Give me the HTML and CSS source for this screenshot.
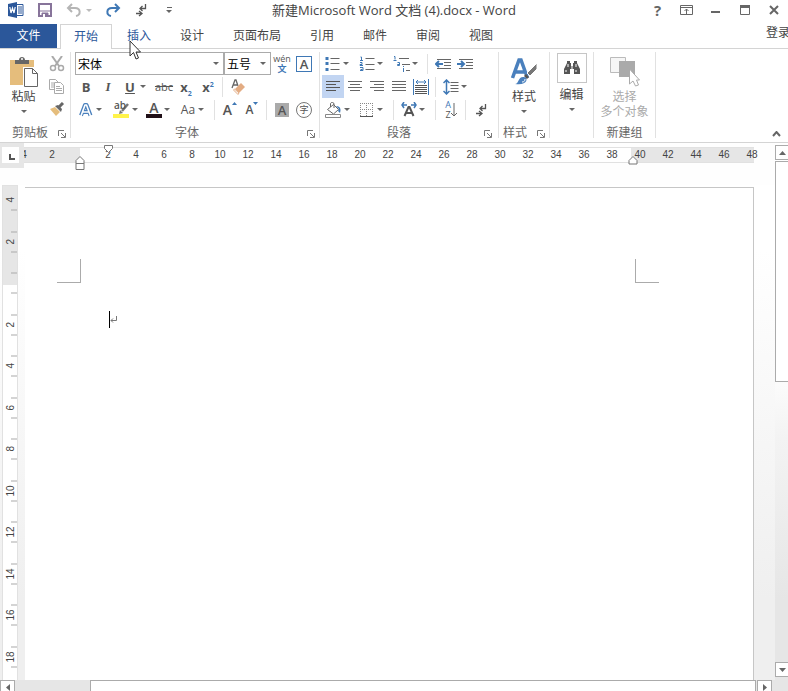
FILE: index.html
```html
<!DOCTYPE html>
<html lang="zh-CN">
<head>
<meta charset="utf-8">
<title>新建Microsoft Word 文档 (4).docx - Word</title>
<link rel="stylesheet" href="styles.css">
</head>
<body>
<header class="titlebar">
  <div class="quick">
    <svg class="logo" width="16" height="16" viewBox="0 0 16 16" aria-hidden="true"><path d="M8 2.500h7v11H8z" fill="#fff" stroke="#2b579a"/><path d="M10 5h4M10 7h4M10 9h4M10 11h4" stroke="#2b579a"/><path d="M0 2l9-2v16l-9-2z" fill="#2b579a"/><path d="M1.800 5l1.200 6 1.500-5 1.500 5 1.200-6" fill="none" stroke="#fff" stroke-width="1.200"/></svg>
    <button class="q" aria-label="保存"><svg width="14" height="14" viewBox="0 0 14 14"><path d="M1 1h12v12H1z" fill="#fff" stroke="#87749a" stroke-width="2"/><path d="M1 8h12M4 10h6v4H4z" fill="#87749a" stroke="#87749a"/><path d="M5 11h2v3H5z" fill="#fff"/></svg></button>
    <button class="q split" aria-label="撤销"><svg width="16" height="14" viewBox="0 0 16 14" fill="none" stroke="#b5b5b5" stroke-width="2"><path d="M6 1L2 5l4 4M2 5h7c6 0 6 7 1 8"/></svg><i class="caret pale"></i></button>
    <button class="q" aria-label="恢复"><svg width="16" height="14" viewBox="0 0 16 14" fill="none" stroke="#3f78b5" stroke-width="2"><path d="M10 1l4 4-4 4M14 5H7c-6 0-6 7-1 8"/></svg></button>
    <button class="q" aria-label="显示标记"><svg width="12" height="14" viewBox="0 0 12 14" fill="none" stroke="#555"><path d="M10.500 1v4.500H5M7.500 3L5 5.500 7.500 8M1 10.500h6M4 8l3 2.500L4 13" stroke-width="1.300"/></svg></button>
    <button class="q" aria-label="自定义快速访问工具栏"><svg width="7" height="7" viewBox="0 0 7 7"><path d="M1 .5h5" stroke="#666"/><path d="M0 3h6L3 6z" fill="#666"/></svg></button>
  </div>
  <h1>新建Microsoft Word 文档 (4).docx - Word</h1>
  <div class="window">
    <button class="help" aria-label="帮助">?</button>
    <button aria-label="功能区显示选项"><svg width="13" height="10" viewBox="0 0 13 10" fill="none" stroke="#666"><path d="M.5.5h12v9H.5zM.5 2.500h12M6.500 9V4M4.500 6l2-2 2 2"/></svg></button>
    <button aria-label="最小化"><svg width="10" height="10" viewBox="0 0 10 10"><path d="M0 6h9v2H0z" fill="#666"/></svg></button>
    <button aria-label="最大化"><svg width="10" height="10" viewBox="0 0 10 10"><path d="M.5.5h9v9h-9z" fill="none" stroke="#666"/><path d="M0 0h10v3H0z" fill="#666"/></svg></button>
    <button aria-label="关闭"><svg width="10" height="10" viewBox="0 0 10 10"><path d="M1 1l8 8M9 1L1 9" stroke="#666" stroke-width="2"/></svg></button>
  </div>
</header>

<nav class="tabs">
  <button class="file">文件</button>
  <button class="active">开始</button>
  <button class="hover">插入</button>
  <button>设计</button>
  <button>页面布局</button>
  <button>引用</button>
  <button>邮件</button>
  <button>审阅</button>
  <button>视图</button>
  <a class="signin" href="#">登录</a>
  <svg class="pointer" width="12" height="20" viewBox="0 0 12 20" aria-hidden="true"><path d="M1 1v15l3.500-3.500L7 19l2.500-1L7 12h4.500z" fill="#fff" stroke="#333"/></svg>
</nav>

<section class="ribbon">
  <section class="group board">
    <div class="body clip">
      <button class="big"><svg width="30" height="31" viewBox="0 0 30 31"><path d="M1 4h24v25H1z" fill="#e5bd7c"/><path d="M6 4h4c0-4 6-4 6 0h4v4H6z" fill="#666"/><circle cx="13" cy="3" r="1" fill="#fff"/><path d="M14 11h16v20H14z" fill="#fff"/><path d="M15.500 12.500h8l5 5v13h-13z" fill="#fff" stroke="#666"/><path d="M23.500 12.500v5h5" fill="none" stroke="#666"/></svg><span>粘贴</span><i class="caret"></i></button>
      <div class="stack">
        <button aria-label="剪切"><svg width="16" height="16" viewBox="0 0 16 16" fill="none" stroke="#aaa" stroke-width="2"><path d="M3 0l7 10M13 0L6 10"/><circle cx="4" cy="12" r="2.500" stroke-width="1.500"/><circle cx="12" cy="12" r="2.500" stroke-width="1.500"/></svg></button>
        <button aria-label="复制"><svg width="16" height="15" viewBox="0 0 16 15" fill="#fff" stroke="#aaa"><path d="M.5.5h6l3 3v7h-9z"/><path d="M2 4h3M2 6h3M2 8h3"/><path d="M5.500 3.500h6l3 3v8h-9z"/><path d="M7 7.500h4M7 9.500h6M7 11.500h6"/></svg></button>
        <button aria-label="格式刷"><svg width="16" height="15" viewBox="0 0 16 15"><path d="M1 7l5-2 5 5-4 4z" fill="#e5bd7c"/><path d="M6 4l3-1 4 4-1 3z" fill="#666"/><path d="M10 5l4-4" stroke="#666" stroke-width="3"/></svg></button>
      </div>
    </div>
    <footer><span>剪贴板</span><button class="launch" aria-label="剪贴板选项"><svg width="8" height="8" viewBox="0 0 8 8"><path d="M.5 6V.5H6M3 3l4 4M7.500 3v4.500H3" fill="none" stroke="#777"/></svg></button></footer>
  </section>

  <section class="group font">
    <div class="body rows">
      <div class="row">
        <label class="combo name"><select aria-label="字体"><option>宋体</option></select><i class="caret"></i></label>
        <label class="combo size"><select aria-label="字号"><option>五号</option></select><i class="caret"></i></label>
        <button class="i pinyin" aria-label="拼音指南"><small>wén</small><b>文</b></button>
        <button class="i" aria-label="字符边框"><span class="boxed">A</span></button>
      </div>
      <div class="row">
        <button class="i"><b>B</b></button>
        <button class="i"><b class="ital">I</b></button>
        <button class="i d"><b class="under">U</b><i class="caret"></i></button>
        <button class="i"><s>abc</s></button>
        <button class="i"><b>x<sub>2</sub></b></button>
        <button class="i"><b>x<sup>2</sup></b></button>
        <hr>
        <button class="i" aria-label="清除所有格式"><svg width="16" height="16" viewBox="0 0 16 16"><path d="M2 9l3-8h1l2 6M3 6h4" fill="none" stroke="#666" stroke-width="1.300"/><path d="M5 10l6-6 4 4-6 6z" fill="#e3ac83"/><path d="M3.500 11l1-1L9 14l-1 1.500z" fill="#fff" stroke="#e3ac83"/></svg></button>
      </div>
      <div class="row">
        <button class="i d" aria-label="文本效果"><svg width="16" height="16" viewBox="0 0 16 16" fill="none" stroke-linejoin="round"><path d="M3 13.500L7 3h1.500l4 10.500M5 10h6" stroke="#4a80bd" stroke-width="4"/><path d="M3 14L7 3h1.500l4 11M5 10h6" stroke="#fff" stroke-width="1.600"/></svg><i class="caret"></i></button>
        <button class="i d hl" aria-label="突出显示"><span>ab</span><svg width="18" height="17" viewBox="0 0 18 17"><path d="M16 3l-6 7" stroke="#777" stroke-width="2.500"/><path d="M8 9l3 3-4 1z" fill="#777"/><path d="M1 13h16v4H1z" fill="#fff34a"/></svg><i class="caret"></i></button>
        <button class="i d" aria-label="字体颜色"><span class="inked">A</span><i class="caret"></i></button>
        <button class="i d"><span>Aa</span><i class="caret"></i></button>
        <hr>
        <button class="i grow" aria-label="增大字体"><span>A</span><svg width="5" height="3" viewBox="0 0 5 3"><path d="M0 3h5L2.500 0z" fill="#3f78b5"/></svg></button>
        <button class="i grow less" aria-label="减小字体"><span>A</span><svg width="5" height="3" viewBox="0 0 5 3"><path d="M0 0h5L2.500 3z" fill="#3f78b5"/></svg></button>
        <hr>
        <button class="i"><span class="shade">A</span></button>
        <button class="i"><span class="ring">字</span></button>
      </div>
    </div>
    <footer><span>字体</span><button class="launch" aria-label="字体选项"><svg width="8" height="8" viewBox="0 0 8 8"><path d="M.5 6V.5H6M3 3l4 4M7.500 3v4.500H3" fill="none" stroke="#777"/></svg></button></footer>
  </section>

  <section class="group para">
    <div class="body rows">
      <div class="row">
        <button class="i d" aria-label="项目符号"><svg width="15" height="15" viewBox="0 0 15 15"><path d="M0 1h3v3H0zM0 6h3v3H0zM0 12h3v3H0z" fill="#3f78b5"/><path d="M5 2.500h9M5 7.500h9M5 13.500h9" stroke="#666"/></svg><i class="caret"></i></button>
        <button class="i d" aria-label="编号"><svg width="15" height="16" viewBox="0 0 15 16"><path d="M1 1h1v3M.5 4.500h3M.5 6.500h2v2h-2v1h3M.5 11.500h3v3h-3M1 13.500h2" fill="none" stroke="#3f78b5"/><path d="M6 2.500h9M6 8.500h9M6 13.500h9" stroke="#666"/></svg><i class="caret"></i></button>
        <button class="i d" aria-label="多级列表"><svg width="17" height="16" viewBox="0 0 17 16"><path d="M1 .5h1v3M.5 4.500h3M4.500 6.500h2v3h-2v-1h2M10.500 10v1M10.500 12v4" fill="none" stroke="#3f78b5"/><path d="M6 2.500h10M9 8.500h8M13 14.500h4" stroke="#666"/></svg><i class="caret"></i></button>
        <hr>
        <button class="i" aria-label="减少缩进量"><svg width="16" height="12" viewBox="0 0 16 12"><path d="M2 1.500h14M9 4.500h7M9 7.500h7M2 10.500h14" stroke="#666"/><path d="M8 6H1M4 3L1 6l3 3" fill="none" stroke="#3f78b5" stroke-width="2"/></svg></button>
        <button class="i" aria-label="增加缩进量"><svg width="16" height="12" viewBox="0 0 16 12"><path d="M2 1.500h14M9 4.500h7M9 7.500h7M2 10.500h14" stroke="#666"/><path d="M0 6h7M4 3l3 3-3 3" fill="none" stroke="#3f78b5" stroke-width="2"/></svg></button>
      </div>
      <div class="row">
        <button class="i on" aria-label="左对齐"><svg width="14" height="11" viewBox="0 0 14 11"><path d="M0 .5h14M0 3.500h10M0 6.500h14M0 9.500h10" stroke="#555"/></svg></button>
        <button class="i" aria-label="居中"><svg width="14" height="11" viewBox="0 0 14 11"><path d="M0 .5h14M2 3.500h10M0 6.500h14M2 9.500h10" stroke="#666"/></svg></button>
        <button class="i" aria-label="右对齐"><svg width="14" height="11" viewBox="0 0 14 11"><path d="M0 .5h14M4 3.500h10M0 6.500h14M4 9.500h10" stroke="#666"/></svg></button>
        <button class="i" aria-label="两端对齐"><svg width="14" height="11" viewBox="0 0 14 11"><path d="M0 .5h14M0 3.500h14M0 6.500h14M0 9.500h14" stroke="#666"/></svg></button>
        <button class="i" aria-label="分散对齐"><svg width="16" height="16" viewBox="0 0 16 16"><path d="M.5 0v16M15.500 0v16M3 3h10M5 1L3 3l2 2M11 1l2 2-2 2" fill="none" stroke="#3f78b5"/><path d="M2 6.500h12M2 8.500h12M2 10.500h12M2 12.500h12M2 14.500h12" stroke="#555"/></svg></button>
        <hr>
        <button class="i d" aria-label="行距"><svg width="15" height="16" viewBox="0 0 15 16"><path d="M3 1v14M0 4l3-3 3 3M0 12l3 3 3-3" fill="none" stroke="#3f78b5" stroke-width="1.500"/><path d="M7 3.500h8M7 6.500h8M7 9.500h8M7 12.500h8" stroke="#666"/></svg><i class="caret"></i></button>
      </div>
      <div class="row">
        <button class="i d" aria-label="底纹"><svg width="17" height="16" viewBox="0 0 17 16"><path d="M2.500 7.500l6-5 5 5-5 4.500zM5.500 5V1.500C6 0 9 0 9 2v4" fill="#fff" stroke="#666"/><path d="M11 4c5 0 5 4 4 7l-2-2 1-2z" fill="#3f78b5"/><path d="M.5 12.500h15v3H.5z" fill="#fff" stroke="#888"/></svg><i class="caret"></i></button>
        <button class="i d" aria-label="边框"><svg width="14" height="14" viewBox="0 0 14 14"><path d="M0 .5h13M0 6.500h13M.5 0v13M6.500 0v13M12.500 0v13" stroke="#888" stroke-dasharray="1 1"/><path d="M0 13.500h13" stroke="#555"/></svg><i class="caret"></i></button>
        <hr>
        <button class="i d" aria-label="中文版式"><svg width="16" height="15" viewBox="0 0 16 15" fill="none"><path d="M3.500 14L7.500 5h1l4 9M5 11h6" stroke="#555" stroke-width="2"/><path d="M6 3H1M3 0L1 3l2 3M10 3h5M13 0l2 3-2 3" stroke="#3f78b5" stroke-width="1.500"/></svg><i class="caret"></i></button>
        <hr>
        <button class="i sort" aria-label="排序"><span><em>A</em><em>Z</em></span><svg width="6" height="14" viewBox="0 0 6 14"><path d="M3 0v13M0 10l3 3 3-3" fill="none" stroke="#666"/></svg></button>
        <hr>
        <button class="i" aria-label="显示编辑标记"><svg width="12" height="14" viewBox="0 0 12 14" fill="none" stroke="#555"><path d="M10.500 1v4.500H5M7.500 3L5 5.500 7.500 8M1 10.500h6M4 8l3 2.500L4 13" stroke-width="1.300"/></svg></button>
      </div>
    </div>
    <footer><span>段落</span><button class="launch" aria-label="段落选项"><svg width="8" height="8" viewBox="0 0 8 8"><path d="M.5 6V.5H6M3 3l4 4M7.500 3v4.500H3" fill="none" stroke="#777"/></svg></button></footer>
  </section>

  <section class="group narrow">
    <div class="body">
      <button class="big"><svg width="28" height="31" viewBox="0 0 28 31"><path d="M2.500 22L9 4h2l6.500 18M5 16h10" fill="none" stroke="#4a80bd" stroke-width="3.500"/><path d="M27 7v6l-7 7-3-3z" fill="#777" stroke="#fff"/><path d="M16 18l3 3-2 2-3-3z" fill="#555"/><path d="M5 28c4 0 3-8 9-7 5 1 3 9-9 7z" fill="#4a80bd"/><path d="M12 26c2 0 3-1 3-3" stroke="#fff" fill="none"/></svg><span>样式</span><i class="caret"></i></button>
    </div>
    <footer><span>样式</span><button class="launch" aria-label="样式选项"><svg width="8" height="8" viewBox="0 0 8 8"><path d="M.5 6V.5H6M3 3l4 4M7.500 3v4.500H3" fill="none" stroke="#777"/></svg></button></footer>
  </section>

  <section class="group edit">
    <div class="body">
      <button class="big"><span class="frame"><svg width="16" height="14" viewBox="0 0 16 14"><path d="M3 0h3v2h1v3h2V2h1V0h3v2l3 6v5h-6V8H6v5H0V8l3-6z" fill="#555"/><path d="M4 3v3M12 3v3M2 9v2M12 9v2M8 5v3" stroke="#fff"/></svg></span><span>编辑</span><i class="caret"></i></button>
    </div>
    <footer></footer>
  </section>

  <section class="group last">
    <div class="body">
      <button class="big" disabled><svg width="30" height="31" viewBox="0 0 30 31"><path d="M.5 1.500h15v15H.5z" fill="#f6f6f6" stroke="#bbb"/><path d="M9 5h16v16H9z" fill="#aaa"/><path d="M19.500 13v15l3.500-3 2.500 5 3-1-2-5h3z" fill="#fff" stroke="#aaa"/></svg><span>选择</span><span class="second">多个对象</span></button>
    </div>
    <footer><span>新建组</span></footer>
  </section>
  <button class="collapse" aria-label="折叠功能区"><svg width="9" height="6" viewBox="0 0 9 6"><path d="M1 5l3.500-4L8 5" fill="none" stroke="#666" stroke-width="2"/></svg></button>
</section>

<main class="workspace">
  <div class="canvas">
    <div class="top">
      <button class="tabstop" aria-label="制表符"><svg width="6" height="6" viewBox="0 0 6 6"><path d="M1 0v5h5" fill="none" stroke="#555" stroke-width="2"/></svg></button>
      <div class="hruler">
        <ol><li>4<li>2<li><li>2<li>4<li>6<li>8<li>10<li>12<li>14<li>16<li>18<li>20<li>22<li>24<li>26<li>28<li>30<li>32<li>34<li>36<li>38<li>40<li>42<li>44<li>46<li>48</ol>
        <svg class="mark first" width="11" height="9" viewBox="0 0 11 9"><path d="M1.500.5h8v3l-4 4-4-4z" fill="#fff" stroke="#777"/></svg>
        <svg class="mark hang" width="10" height="15" viewBox="0 0 10 15"><path d="M1 13.500v-9l4-4 4 4v9zM1 7.500h8" fill="#fff" stroke="#777"/></svg>
        <svg class="mark right" width="10" height="9" viewBox="0 0 10 9"><path d="M1 8V4.500l4-4 4 4V8z" fill="#fff" stroke="#777"/></svg>
      </div>
    </div>
    <div class="desk">
      <div class="vruler"><ol><li>4<li>2<li><li>2<li>4<li>6<li>8<li>10<li>12<li>14<li>16<li>18</ol></div>
      <article class="page">
        <div class="corners"><i></i><i></i></div>
        <p contenteditable="true" aria-label="正文"><span class="beam"></span><svg width="8" height="8" viewBox="0 0 8 8"><path d="M6.500 0v4.500H1M3 2.500l-2 2 2 2" fill="none" stroke="#777"/></svg></p>
      </article>
    </div>
  </div>
  <div class="vscroll">
    <button aria-label="向上滚动"><svg width="7" height="4" viewBox="0 0 7 4"><path d="M0 4h7L3.500 0z" fill="#666"/></svg></button>
    <div class="thumb"></div>
    <button class="end" aria-label="向下滚动"><svg width="7" height="4" viewBox="0 0 7 4"><path d="M0 0h7L3.500 4z" fill="#666"/></svg></button>
  </div>
</main>
<div class="hscroll">
  <button aria-label="向左滚动"><svg width="4" height="7" viewBox="0 0 4 7"><path d="M4 0v7L0 3.500z" fill="#666"/></svg></button>
  <div class="thumb"></div>
  <button aria-label="向右滚动"><svg width="4" height="7" viewBox="0 0 4 7"><path d="M0 0v7l4-3.500z" fill="#666"/></svg></button>
</div>
</body>
</html>
```

FILE: styles.css
```css
* { box-sizing: border-box; }

body {
  margin: 0;
  height: 100vh;
  display: flex;
  flex-direction: column;
  overflow: hidden;
  background: #fff;
  color: #444;
  font: 12px/16px "Open Sans", "Noto Sans CJK SC", sans-serif;
}

button {
  display: flex;
  align-items: center;
  justify-content: center;
  padding: 0;
  border: 0;
  background: none;
  color: inherit;
  font: inherit;
}

svg { display: block; flex: none; }

.caret {
  flex: none;
  border: 3px solid transparent;
  border-top-color: #666;
  border-bottom: 0;
}
.caret.pale { border-top-color: #bbb; }

/* Title bar */
.titlebar {
  display: grid;
  grid-template-columns: 1fr auto 1fr;
  align-items: center;
  height: 24px;
  padding-bottom: 4px;
}
.titlebar h1 { margin: 0; font-size: 13px; font-weight: 400; }
.quick { display: flex; gap: 6px; align-items: center; padding-left: 8px; }
.q { width: 22px; height: 20px; }
.q.split { gap: 4px; width: 34px; }
.logo { margin-right: 4px; }
.window { display: flex; justify-content: flex-end; }
.window button { width: 29px; height: 20px; }
.window .help { color: #666; font-weight: 700; font-size: 15px; }

/* Tabs */
.tabs {
  position: relative;
  display: flex;
  gap: 1px;
  height: 25px;
  border-bottom: 1px solid #d4d4d4;
}
.tabs button { padding: 0 14px; height: 24px; }
.tabs .file { width: 57px; margin-right: 2px; background: #2b579a; color: #fff; }
.tabs .active {
  height: 25px;
  padding: 0 13px;
  border: 1px solid #d4d4d4;
  border-bottom: 0;
  background: #fff;
  color: #2b579a;
}
.tabs .hover { color: #2b579a; }
.signin {
  width: 22px;
  margin-left: auto;
  overflow: hidden;
  white-space: nowrap;
  line-height: 18px;
  color: #444;
  text-decoration: none;
}
.pointer { position: absolute; left: 129px; top: 16px; z-index: 3; }

/* Ribbon */
.ribbon {
  display: flex;
  height: 94px;
  padding-top: 3px;
  border-bottom: 1px solid #d4d4d4;
}
.group {
  display: flex;
  flex-direction: column;
  height: 86px;
  padding: 0 4px;
  border-right: 1px solid #e1e1e1;
}
.group.board { width: 71px; }
.group.font { padding: 0 4px 0 4px; }
.group.para { padding: 0 6px 0 2px; }
.body { flex: 1; display: flex; }
.group footer {
  position: relative;
  display: flex;
  justify-content: center;
  height: 16px;
  margin-bottom: -3px;
  color: #666;
}
.board footer { padding-right: 10px; }
.font footer, .para footer { padding-right: 16px; }
.launch { position: absolute; right: 0; top: 4px; width: 8px; height: 9px; }
.rows { flex-direction: column; }
.row { display: flex; align-items: center; height: 23px; }
.row hr { width: 1px; height: 20px; margin: 0 4px 0 3px; border: 0; background: #e1e1e1; }
.i { width: 22px; height: 23px; color: #555; }
.i.d { width: 34px; gap: 2px; justify-content: flex-start; padding-left: 3px; }
.i.d > :first-child { min-width: 16px; }
.i.on { background: #c2d5f2; }
.i b { font-size: 13px; }
.i .ital { font-style: italic; font-family: "Liberation Serif", serif; }
.i .under { text-decoration: underline; }
.i s { font-size: 11px; }
.i sub, .i sup { font-size: 7px; line-height: 1px; color: #3f78b5; }

.combo {
  display: flex;
  align-items: center;
  height: 23px;
  padding: 0 4px 0 2px;
  border: 1px solid #ababab;
}
.combo.name { width: 149px; }
.combo.size { width: 47px; }
.combo select {
  flex: 1;
  min-width: 0;
  padding: 0;
  border: 0;
  appearance: none;
  background: none;
  color: #000;
  font: 12px/18px "Noto Sans CJK SC", sans-serif;
}
.pinyin { flex-direction: column; }
.pinyin small { font-size: 9px; line-height: 10px; }
.i.pinyin b { font-size: 9px; line-height: 10px; color: #3f78b5; }
.boxed { width: 16px; border: 1px solid #3f78b5; font-weight: 600; line-height: 14px; font-size: 13px; }
.inked { border-bottom: 4px solid #201018; font-weight: 600; font-size: 14px; line-height: 12px; }
.shade { width: 14px; background: #aaa; font-weight: 600; line-height: 14px; font-size: 13px; }
.ring { width: 16px; border: 1px solid #777; border-radius: 50%; font-size: 9px; line-height: 14px; }
.hl { position: relative; }
.hl span { position: absolute; left: 3px; top: 1px; font-size: 10px; line-height: 12px; font-weight: 600; }
.grow { align-items: flex-start; padding-top: 4px; font-size: 14px; font-weight: 600; }
.grow.less { font-size: 12px; }
.sort span { display: flex; flex-direction: column; font-size: 9px; line-height: 10px; }
.sort em { font-style: normal; }
.sort em:first-child { color: #3f78b5; }

.clip { gap: 5px; }
.big { flex: 1; flex-direction: column; justify-content: flex-start; padding-top: 4px; }
.big > span { margin-top: 2px; line-height: 16px; }
.big > .second { margin-top: -1px; }
.big .caret { margin-top: 5px; }
.big:disabled { color: #aaa; }
.stack button { width: 18px; height: 23px; }
.group.narrow { width: 51px; }
.narrow footer { justify-content: flex-start; }
.group.edit { width: 44px; }
.edit .big { padding-top: 1px; }
.edit .big > span { margin-top: 0; }
.edit .big > .frame {
  display: flex;
  align-items: center;
  justify-content: center;
  width: 30px;
  height: 30px;
  margin-bottom: 4px;
  border: 1px solid #c6c6c6;
}
.group.last { width: 62px; }
.last .big { white-space: nowrap; }
.collapse { align-self: flex-end; width: 24px; height: 16px; margin-left: auto; }

/* Document area */
.workspace { flex: 1; display: flex; min-height: 0; }
.canvas {
  flex: 1;
  display: flex;
  flex-direction: column;
  min-width: 0;
  background: linear-gradient(#fff 20%, #fafafa 40%, #efefef 85%);
}
.top { display: flex; height: 42px; flex: none; background: #fefefe; }
.tabstop {
  position: relative;
  z-index: 1;
  flex: none;
  width: 24px;
  height: 25px;
  padding: 4px 0 0 3px;
  border: solid #e6e6e6;
  border-width: 4px 5px 5px 2px;
  background: #fff;
}
.hruler {
  position: relative;
  flex: 1;
  min-width: 0;
  height: 16px;
  margin: 4px 21px 0 0;
  border: solid #e1e1e1;
  border-width: 1px 0;
  background: linear-gradient(90deg, #e6e6e6 56px, #fff 56px, #fff 607px, #e6e6e6 607px);
}
ol { margin: 0; padding: 0; list-style: none; font-family: "Liberation Sans", sans-serif; font-size: 10px; color: #444; }
.hruler ol { display: flex; margin-left: -14px; }
.hruler li { flex: none; width: 28px; text-align: center; line-height: 14px; }
.mark { position: absolute; }
.mark.first { left: 79px; top: -3px; }
.mark.hang { left: 51px; top: 8px; }
.mark.right { left: 604px; top: 8px; }

.desk { flex: 1; display: flex; min-height: 0; padding-left: 2px; }
.vruler {
  width: 16px;
  margin-right: 7px;
  overflow: hidden;
  border: 1px solid #e1e1e1;
  border-bottom: 0;
  background: linear-gradient(#e6e6e6 99px, #fff 99px);
}
.vruler ol { display: grid; grid-template-rows: repeat(12, 1fr); height: 498px; margin-top: -7px; }
.vruler li {
  display: flex;
  align-items: center;
  justify-content: center;
  writing-mode: vertical-rl;
  transform: rotate(180deg);
  background:
    linear-gradient(#aaa, #aaa) 2px 25% / 6px 1px no-repeat,
    linear-gradient(#aaa, #aaa) 2px 75% / 6px 1px no-repeat;
}
.vruler li:first-child { background: linear-gradient(#aaa, #aaa) 2px 25% / 6px 1px no-repeat; }
.page {
  flex: 1;
  margin: 2px 21px 0 0;
  border: solid #c6c6c6;
  border-width: 1px 1px 0 0;
  background: #fff;
}
.corners { display: flex; justify-content: space-between; padding: 71px 94px 0 32px; }
.corners i { width: 24px; height: 24px; border: solid #ababab; border-width: 0 1px 1px 0; }
.corners i + i { border-width: 0 0 1px 1px; }
.page p { display: flex; align-items: center; margin: 28px 94px 0 84px; outline: 0; }
.beam { width: 1px; height: 17px; background: #000; }

/* Scroll bars */
.vscroll { display: flex; flex-direction: column; width: 13px; padding: 2px 0 3px; background: linear-gradient(#fff 40%, #f3f3f3 55%, #e6e6e6 85%); }
.vscroll button, .hscroll button { flex: none; border: 1px solid #ababab; background: #fff; }
.vscroll button { height: 15px; border-right: 0; }
.vscroll .thumb { height: 221px; margin-top: 1px; border: 1px solid #ababab; border-right: 0; background: #fff; }
.vscroll .end { margin-top: auto; }
.hscroll { display: flex; height: 11px; padding-right: 16px; background: #e6e6e6; overflow: hidden; }
.hscroll button { width: 15px; height: 15px; }
.hscroll .thumb { flex: 1; height: 15px; margin: 0 1px 0 75px; border: 1px solid #ababab; background: #fff; }
```
